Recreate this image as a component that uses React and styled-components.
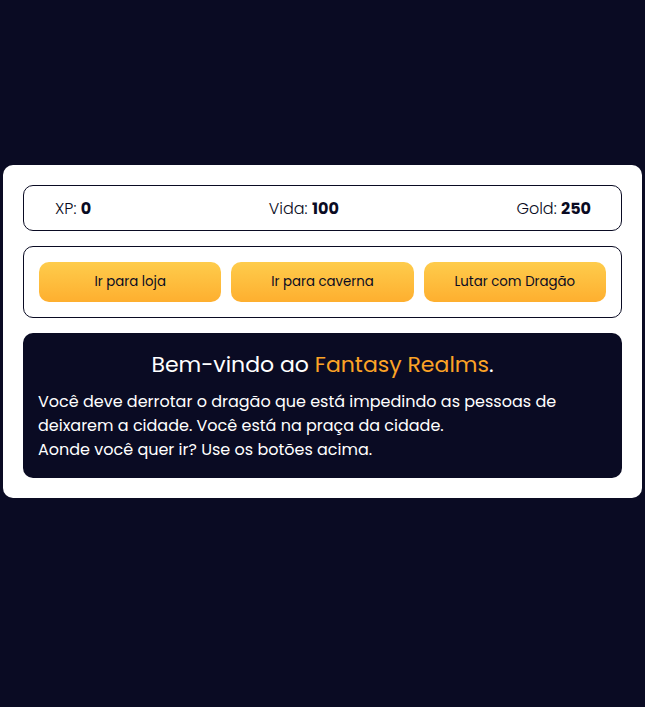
import React from 'react';
import styled, { createGlobalStyle } from 'styled-components';

const GlobalStyle = createGlobalStyle`
  html, body {
    margin: 0;
    padding: 0;
    background-color: #0a0b23;
    font-family: "Poppins", "Open Sans", "Noto Sans", sans-serif;
  }
  * { box-sizing: border-box; }
`;

const stats = [
  { label: 'XP', value: 0 },
  { label: 'Vida', value: 100 },
  { label: 'Gold', value: 250 },
];

const actions = ['Ir para loja', 'Ir para caverna', 'Lutar com Dragão'];

const App = () => {
  return (
    <>
      <GlobalStyle />
      <Page>
        <Game>
          <Stats>
            {stats.map((s) => (
              <Stat key={s.label}>
                {s.label}: <strong>{s.value}</strong>
              </Stat>
            ))}
          </Stats>

          <Controls>
            {actions.map((a) => (
              <ActionButton key={a}>{a}</ActionButton>
            ))}
          </Controls>

          <Story>
            <Title>
              Bem-vindo ao <Highlight>Fantasy Realms</Highlight>.
            </Title>
            <Text>
              Você deve derrotar o dragão que está impedindo as pessoas de
              deixarem a cidade. Você está na praça da cidade.
              <br />
              Aonde você quer ir? Use os botões acima.
            </Text>
          </Story>
        </Game>
      </Page>
    </>
  );
};

const Page = styled.main`
  min-height: 707px;
  padding: 165px 3px 0;
`;

const Game = styled.section`
  background-color: #ffffff;
  border-radius: 10px;
  padding: 20px;
  display: flex;
  flex-direction: column;
  gap: 15px;
`;

const Stats = styled.div`
  height: 46px;
  border: 1px solid #0a0b23;
  border-radius: 10px;
  padding: 0 30px 0 31px;
  display: flex;
  align-items: center;
  justify-content: space-between;
  color: #0a0b23;
  font-size: 16px;
  font-weight: 300;
`;

const Stat = styled.span`
  strong {
    font-weight: 700;
  }
`;

const Controls = styled.div`
  border: 1px solid #0a0b23;
  border-radius: 10px;
  padding: 15px;
  display: grid;
  grid-template-columns: repeat(3, 1fr);
  gap: 10px;
`;

const ActionButton = styled.button`
  height: 40px;
  border: none;
  border-radius: 10px;
  background: linear-gradient(#fecc4c, #feaf2f);
  color: #0a0b23;
  font-family: inherit;
  font-size: 13.333px;
  cursor: pointer;
`;

const Story = styled.div`
  background-color: #0a0b23;
  color: #ffffff;
  border-radius: 10px;
  padding: 16px 15px 16px;
`;

const Title = styled.h2`
  margin: 0 0 9px;
  text-align: center;
  font-size: 22px;
  font-weight: 400;
  line-height: 32px;
`;

const Highlight = styled.span`
  color: #fca326;
`;

const Text = styled.p`
  margin: 0;
  font-size: 16px;
  line-height: 24px;
`;

export default App;
